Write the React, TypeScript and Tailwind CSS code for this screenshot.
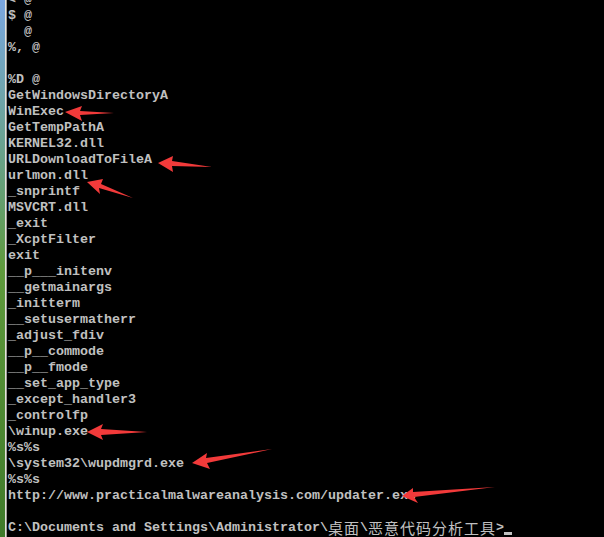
import React from 'react';

const lines = [
  '< @',
  '$ @',
  '  @',
  '%, @',
  '',
  '%D @',
  'GetWindowsDirectoryA',
  'WinExec',
  'GetTempPathA',
  'KERNEL32.dll',
  'URLDownloadToFileA',
  'urlmon.dll',
  '_snprintf',
  'MSVCRT.dll',
  '_exit',
  '_XcptFilter',
  'exit',
  '__p___initenv',
  '__getmainargs',
  '_initterm',
  '__setusermatherr',
  '_adjust_fdiv',
  '__p__commode',
  '__p__fmode',
  '__set_app_type',
  '_except_handler3',
  '_controlfp',
  '\\winup.exe',
  '%s%s',
  '\\system32\\wupdmgrd.exe',
  '%s%s',
  'http://www.practicalmalwareanalysis.com/updater.exe',
  '',
];

// arrows: tip, head top, neck top, tail, neck bottom, head bottom
const arrows = [
  '65,112 82,106 80,111 114,113 80,115 82,121',
  '158,163 173,156 172,161 212,167 172,166 173,172',
  '87,182 103,179 101,184 133,198 99,188 100,194',
  '87,432 103,424 101,429 147,432 101,435 103,440',
  '192,463 207,453 206,458 272,449 207,463 210,469',
  '402,496 413,488 413,492 495,487 414,497 418,503',
];

const Cjk: React.FC<{ text: string }> = ({ text }) => (
  <span className="tracking-[1px] text-[15px] font-normal" style={{ fontFamily: '"Noto Sans CJK SC", sans-serif' }}>
    {text}
  </span>
);

const App: React.FC = () => {
  return (
    <div className="relative flex w-[604px] h-[537px] overflow-hidden bg-black">
      {/* desktop peeking through on the left */}
      <div className="w-[5px] h-full bg-gradient-to-b from-[#7aa6e0] via-[#5f9a3c] to-[#3f7a2a]"></div>
      <div className="w-[1px] h-full bg-[#e4e2dc]"></div>
      <div className="w-[1px] h-full bg-[#9c9a94]"></div>

      <div
        className="flex-1 -mt-[8px] pl-[1px] text-[13.333px] leading-[16px] font-bold text-[#c0c0c0] whitespace-pre"
        style={{ fontFamily: '"Liberation Mono", monospace' }}
      >
        {lines.map((l, i) => (
          <div key={i} className="h-[16px]">{l}</div>
        ))}
        <div className="h-[16px] flex items-start">
          <span>C:\Documents and Settings\Administrator\</span>
          <Cjk text="桌面" />
          <span>\</span>
          <Cjk text="恶意代码分析工具" />
          <span>&gt;</span>
          <span className="inline-block w-[8px] h-[3px] bg-[#c0c0c0] mt-[12px]"></span>
        </div>
      </div>

      <svg className="absolute inset-0 pointer-events-none" width="604" height="537" viewBox="0 0 604 537">
        {arrows.map((p, i) => (
          <polygon key={i} points={p} fill="#f23a3a" />
        ))}
      </svg>
    </div>
  );
};

export default App;
